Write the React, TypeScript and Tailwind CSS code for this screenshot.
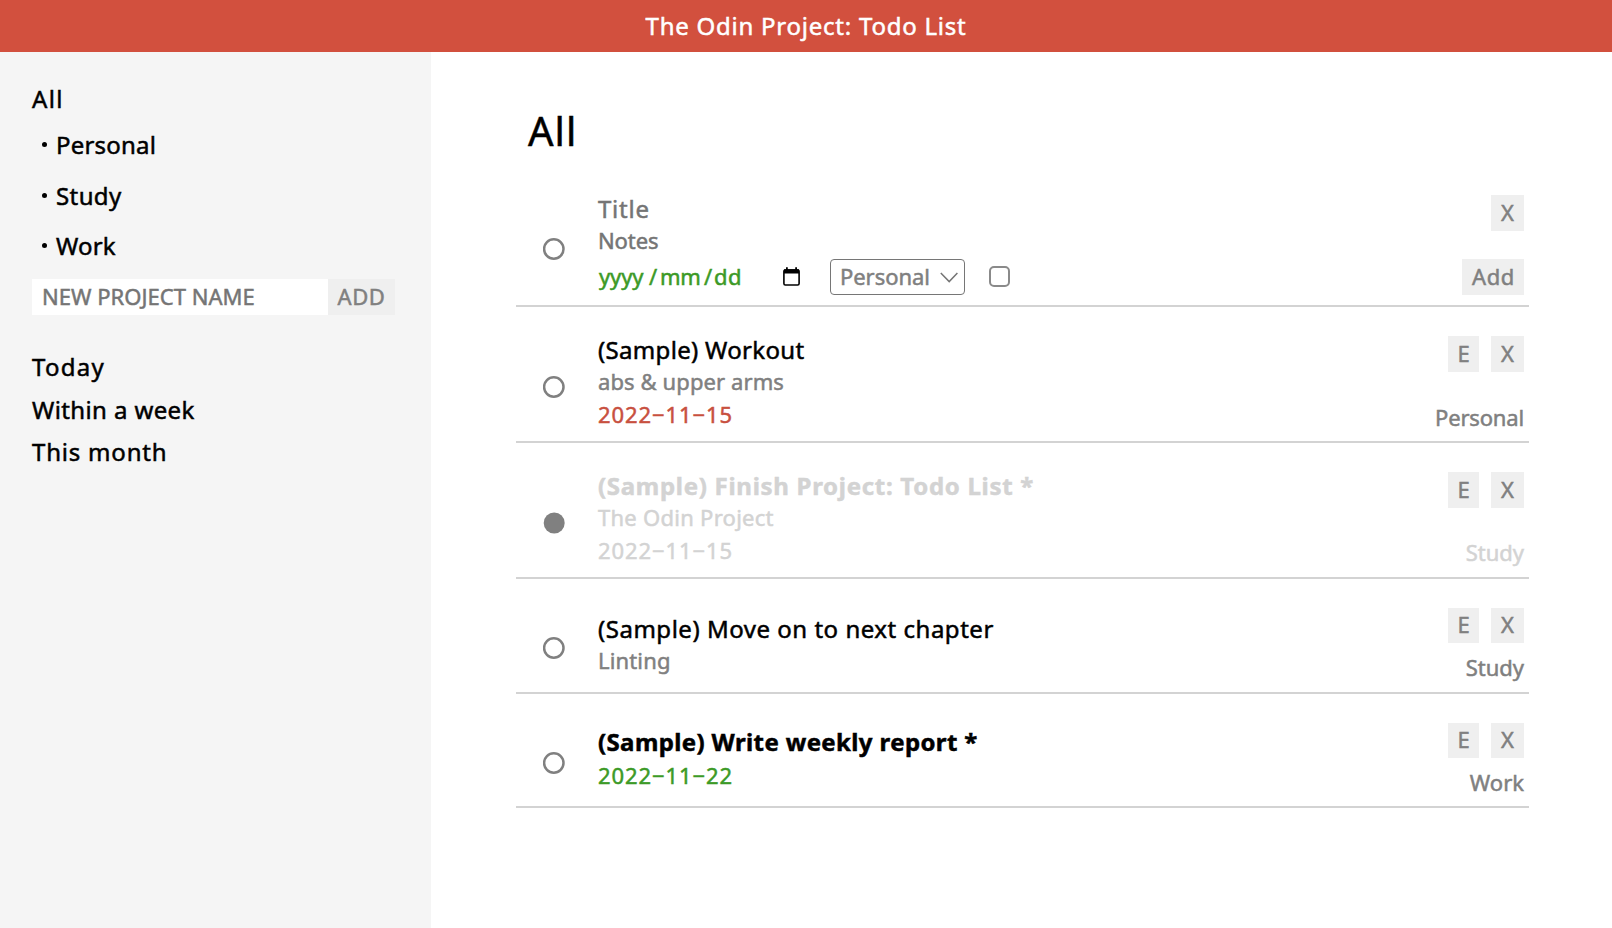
type Todo = {
  title: string;
  titleClass: string;
  notes?: string;
  notesClass?: string;
  date?: string;
  dateClass?: string;
  project: string;
  projectClass: string;
  done?: boolean;
  rowClass: string;
  textClass: string;
  buttonClass: string;
};

const todos: Todo[] = [
  {
    title: "(Sample) Workout",
    titleClass: "tracking-[0.32px] text-black",
    notes: "abs & upper arms",
    notesClass: "tracking-[0.1px] text-[#808080]",
    date: "2022−11−15",
    dateClass: "text-[#c8503f]",
    project: "Personal",
    projectClass: "tracking-[-0.16px] text-[#808080]",
    rowClass: "h-[136px]",
    textClass: "pt-[3px]",
    buttonClass: "h-9 pb-0.5",
  },
  {
    title: "(Sample) Finish Project: Todo List *",
    titleClass: "font-bold tracking-[0.71px] text-[#d3d3d3]",
    notes: "The Odin Project",
    notesClass: "tracking-[0.27px] text-[#d3d3d3]",
    date: "2022−11−15",
    dateClass: "text-[#d3d3d3]",
    project: "Study",
    projectClass: "mb-px text-[#d3d3d3]",
    done: true,
    rowClass: "h-[136px]",
    textClass: "pt-[3px]",
    buttonClass: "h-9 pb-0.5",
  },
  {
    title: "(Sample) Move on to next chapter",
    titleClass: "tracking-[0.52px] text-black",
    notes: "Linting",
    notesClass: "tracking-[0.15px] text-[#808080]",
    project: "Study",
    projectClass: "mb-px text-[#808080]",
    rowClass: "h-[115px]",
    textClass: "pt-[10px]",
    buttonClass: "h-[35px] pb-[3px]",
  },
  {
    title: "(Sample) Write weekly report *",
    titleClass: "font-bold tracking-[0.38px] text-black",
    date: "2022−11−22",
    dateClass: "text-[#3c9a26]",
    project: "Work",
    projectClass: "text-[#808080]",
    rowClass: "h-[114px]",
    textClass: "pt-[8px]",
    buttonClass: "h-[35px] pb-[3px]",
  },
];

function Circle({ filled = false, className = "pt-px" }: { filled?: boolean; className?: string }) {
  return (
    <div className={`flex w-[82px] shrink-0 items-center pl-[27px] ${className}`}>
      <svg width="22" height="22" viewBox="0 0 22 22">
        {filled ? (
          <circle cx="11.2" cy="11" r="10.5" fill="#808080" />
        ) : (
          <circle cx="10.8" cy="11" r="9.7" fill="none" stroke="#808080" strokeWidth="2.5" />
        )}
      </svg>
    </div>
  );
}

function IconButton({ label, className }: { label: string; className: string }) {
  return (
    <button className={`flex items-center justify-center bg-[#efefef] text-[22px] leading-8 text-[#808080] ${className}`}>
      {label}
    </button>
  );
}

function NewTodoRow() {
  return (
    <li className="flex h-[117px] border-b-2 border-[#d3d3d3]">
      <Circle className="pt-[3px]" />
      <div className="flex grow flex-col">
        <div className="mt-[3px] h-8 text-2xl leading-8 tracking-[0.75px] text-[#757575]">Title</div>
        <div className="h-[31px] text-[22px] leading-[31px] tracking-[-0.1px] text-[#757575]">Notes</div>
        <div className="mt-[3px] flex h-9 items-center">
          <div className="-mt-[2px] flex w-[185px] items-center pl-px text-[22px] leading-9 text-[#3c9a26]">
            <span className="w-[50px] tracking-[-0.1px]">yyyy</span>
            <span className="w-[11px]">/</span>
            <span className="w-[44px] tracking-[-0.2px]">mm</span>
            <span className="w-[10px]">/</span>
            <span className="tracking-[0.5px]">dd</span>
          </div>
          <svg className="-mt-px shrink-0" width="17" height="20" viewBox="0 0 17 20">
            <path
              d="M2.300 3h12.400a1.400 1.400 0 0 1 1.400 1.400V16.600a1.400 1.400 0 0 1-1.400 1.400H2.300A1.400 1.400 0 0 1 .9 16.600V4.400A1.400 1.400 0 0 1 2.300 3Z"
              fill="none"
              stroke="#000"
              strokeWidth="1.600"
            />
            <path d="M1 2.300h15v4.200H1ZM3 .3h1.800v3H3ZM12.200.3H14v3h-1.800Z" fill="#000" />
          </svg>
          <div className="ml-[30px] flex h-9 w-[135px] items-center rounded-[4px] border border-[#767676] pl-[9px] text-[22px] leading-8 tracking-[-0.05px] text-[#808080]">
            <span className="-mt-[2px] w-[100px]">Personal</span>
            <svg width="18" height="11" viewBox="0 0 18 11">
              <path d="M.8 1l8.400 8.600L17.400 1" fill="none" stroke="#757575" strokeWidth="1.500" />
            </svg>
          </div>
          <div className="-mt-[2px] ml-6 h-[21px] w-[21px] rounded-[5px] border-2 border-[#8a8a8a] bg-white" />
        </div>
      </div>
      <div className="flex flex-col items-end pr-[5px] pt-[5px]">
        <IconButton label="X" className="h-9 w-[33px] pb-0.5" />
        <IconButton label="Add" className="mt-7 h-9 w-[62px] pb-0.5 pl-px tracking-[0.6px]" />
      </div>
    </li>
  );
}

function TodoRow({ todo }: { todo: Todo }) {
  return (
    <li className={`flex border-b-2 border-[#d3d3d3] pt-6 ${todo.rowClass}`}>
      <Circle filled={todo.done} />
      <div className={`flex grow flex-col ${todo.textClass}`}>
        <div className={`h-8 text-2xl leading-8 ${todo.titleClass}`}>{todo.title}</div>
        {todo.notes && <div className={`-mt-px h-8 text-[22px] leading-8 ${todo.notesClass}`}>{todo.notes}</div>}
        {todo.date && (
          <div className={`mt-px h-8 text-[22px] leading-8 tracking-[0.92px] ${todo.dateClass}`}>{todo.date}</div>
        )}
      </div>
      <div className="flex flex-col items-end justify-between pb-[8px] pr-[5px] pt-[5px]">
        <div className="flex gap-3">
          <IconButton label="E" className={`w-[31px] ${todo.buttonClass}`} />
          <IconButton label="X" className={`w-[33px] ${todo.buttonClass}`} />
        </div>
        <div className={`text-[22px] leading-8 ${todo.projectClass}`}>{todo.project}</div>
      </div>
    </li>
  );
}

function ProjectItem({ name, className }: { name: string; className: string }) {
  return (
    <li className={`flex items-center text-2xl leading-8 ${className}`}>
      <span className="-mt-px ml-[10px] mr-[9px] h-[5px] w-[5px] rounded-full bg-black" />
      {name}
    </li>
  );
}

export default function App() {
  return (
    <div className="flex h-[928px] w-full flex-col bg-white font-['Noto_Sans',sans-serif] text-black [-webkit-text-stroke:0.5px]">
      <header className="flex h-[52px] shrink-0 items-center justify-center bg-[#d2503e] pb-px text-2xl leading-8 tracking-[0.76px] text-white">
        The Odin Project: Todo List
      </header>
      <div className="flex grow">
        <aside className="w-[431px] shrink-0 bg-[#f5f5f5] pl-8 pt-[31px]">
          <div className="h-8 text-2xl leading-8 tracking-[1.3px]">All</div>
          <ul>
            <ProjectItem name="Personal" className="mt-[14px] tracking-[0.2px]" />
            <ProjectItem name="Study" className="mt-[19px] tracking-[0.4px]" />
            <ProjectItem name="Work" className="mt-[18px] tracking-[0.2px]" />
          </ul>
          <div className="mt-[17px] flex h-9 w-[363px]">
            <div className="grow bg-white pl-[10px] text-[22px] leading-[34px] tracking-[0.03px] text-[#757575]">
              NEW PROJECT NAME
            </div>
            <IconButton label="ADD" className="h-9 w-[67px] pb-0.5 tracking-[0.6px]" />
          </div>
          <ul className="mt-[36px] text-2xl leading-8">
            <li className="tracking-[1.3px]">Today</li>
            <li className="mt-[11px] tracking-[0.38px]">Within a week</li>
            <li className="mt-[10px] tracking-[0.8px]">This month</li>
          </ul>
        </aside>
        <main className="grow pl-[85px] pr-[83px] pt-[53px]">
          <h1 className="h-[52px] pl-3 text-[40px] leading-[52px] tracking-[1px]">All</h1>
          <ul className="mt-[33px]">
            <NewTodoRow />
            {todos.map((todo) => (
              <TodoRow key={todo.title} todo={todo} />
            ))}
          </ul>
        </main>
      </div>
    </div>
  );
}
